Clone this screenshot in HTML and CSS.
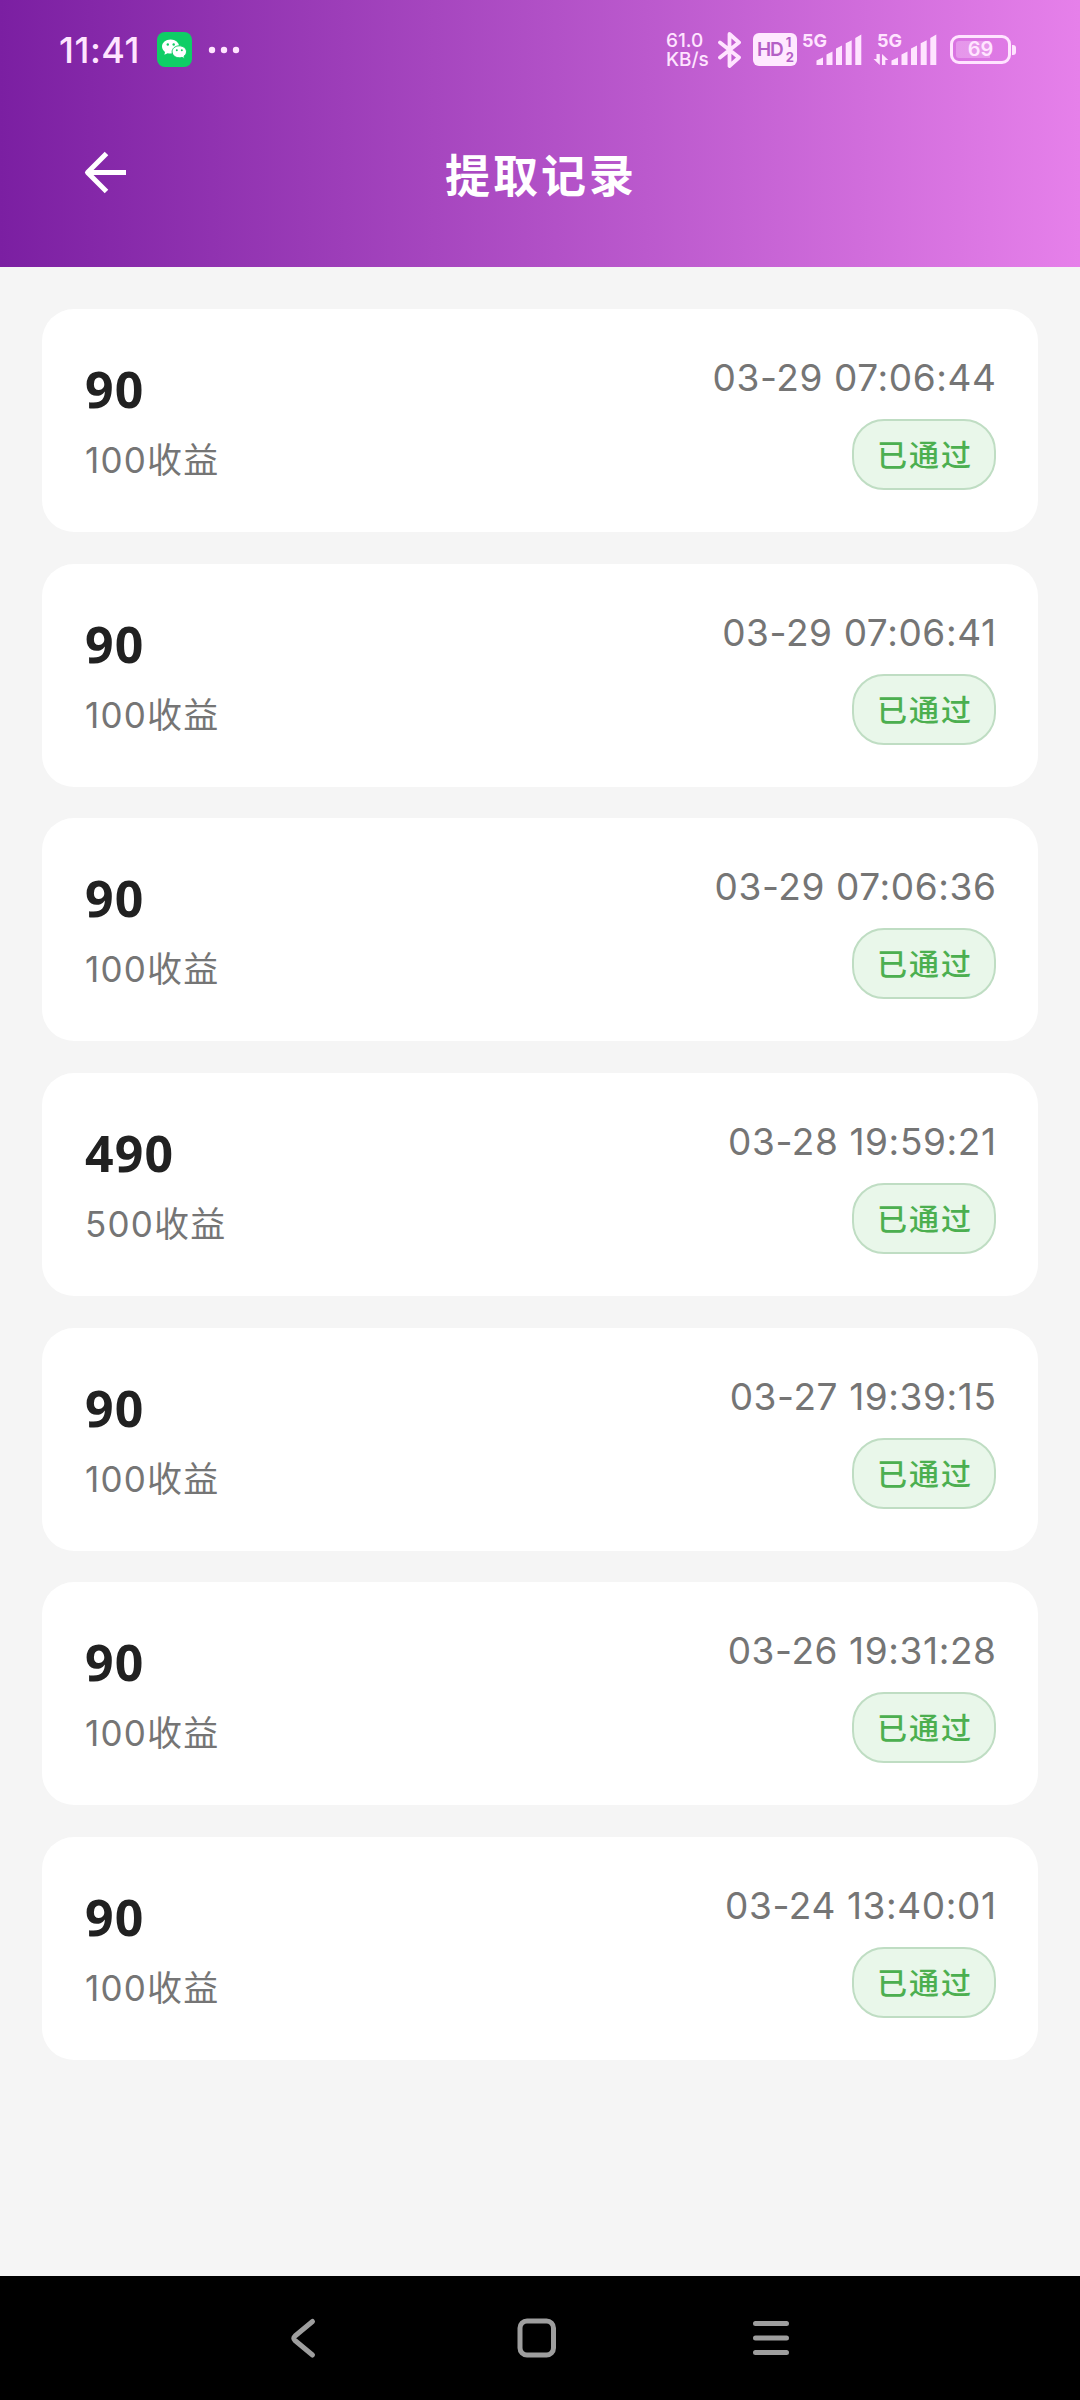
FILE: index.html
```html
<!DOCTYPE html>
<html lang="zh-CN">
<head>
<meta charset="utf-8">
<title>提取记录</title>
<link rel="stylesheet" href="styles.css">
</head>
<body>
<div class="screen">
  <header class="header">
    <div class="status">
      <div class="status-left">
        <span class="clock">11:41</span>
        <svg class="wechat" width="35" height="35" viewBox="0 0 35 35">
          <rect width="35" height="35" rx="8" fill="#0fce66"/>
          <path d="M13.6 7.5c-4.900 0-8.600 3.200-8.600 7.100 0 2.200 1.200 4.100 3 5.400l-.6 2.700 3.200-1.500c1 .3 2 .4 3 .4 4.800 0 8.600-3.100 8.600-7s-3.800-7.100-8.600-7.100z" fill="#fff"/>
          <path d="M22.300 13.800c4 0 7.200 2.700 7.200 6 0 1.800-1 3.400-2.500 4.500l.5 2.300-2.600-1.200c-.8.200-1.700.4-2.600.4-4 0-7.200-2.700-7.200-6s3.200-6 7.200-6z" fill="#fff" stroke="#0fce66" stroke-width="1"/>
          <g fill="#0fce66"><circle cx="10.800" cy="12.500" r="1.200"/><circle cx="16.700" cy="12.500" r="1.200"/><circle cx="19.800" cy="18.200" r="1"/><circle cx="24.800" cy="18.200" r="1"/></g>
        </svg>
        <svg class="dots" width="32" height="8" viewBox="0 0 32 8" fill="currentColor"><circle cx="4" cy="4" r="3.200"/><circle cx="16" cy="4" r="3.200"/><circle cx="28" cy="4" r="3.200"/></svg>
      </div>
      <div class="status-right">
        <div class="speed"><span>61.0</span><span>KB/s</span></div>
        <svg class="bluetooth" width="24" height="38" viewBox="0 0 24 38" fill="none" stroke="currentColor" stroke-width="3.800" stroke-linejoin="round" stroke-linecap="round"><path d="M3 11.500 22 26.500 12.500 35V3L22 11.500 3 26.500"/></svg>
        <div class="hd"><span>HD</span><span class="hd-sims"><i>1</i><i>2</i></span></div>
        <div class="signal">
          <span class="net">5G</span>
          <svg class="bars" width="64" height="33" viewBox="0 0 64 33" fill="currentColor"><path d="M18.500 27.500l6.500-3v7.500h-6.500zM28.500 21.500l6-3V32h-6zM38 15.500l6-3V32h-6zM47.700 10.200l6-3V32h-6zM57.300 5l6-3.500V32h-6z"/></svg>
        </div>
        <div class="signal second">
          <span class="net">5G</span>
          <svg class="bars" width="64" height="33" viewBox="0 0 64 33" fill="currentColor"><path d="M18.500 27.500l6.500-3v7.500h-6.500zM28.500 21.500l6-3V32h-6zM38 15.500l6-3V32h-6zM47.700 10.200l6-3V32h-6zM57.300 5l6-3.500V32h-6zM3.500 21h3.300v11L.5 26h3zM9 32V21l6.300 6h-3v5z"/></svg>
        </div>
        <div class="battery"><span class="level">69</span></div>
        <span class="nub"></span>
      </div>
    </div>
    <div class="titlebar">
      <svg class="back" width="44" height="44" viewBox="0 0 44 44" fill="none" stroke="#fff" stroke-width="5" stroke-linejoin="round"><path d="M43 21.500H5M23.500 2.500 4.500 21.500 23.500 40.500"/></svg>
      <h1>提取记录</h1>
    </div>
  </header>
  <main class="list">
    <article class="card"><div class="info"><strong>90</strong><span>100收益</span></div><div class="meta"><time>03-29 07:06:44</time><span class="badge">已通过</span></div></article>
    <article class="card"><div class="info"><strong>90</strong><span>100收益</span></div><div class="meta"><time>03-29 07:06:41</time><span class="badge">已通过</span></div></article>
    <article class="card"><div class="info"><strong>90</strong><span>100收益</span></div><div class="meta"><time>03-29 07:06:36</time><span class="badge">已通过</span></div></article>
    <article class="card"><div class="info"><strong>490</strong><span>500收益</span></div><div class="meta"><time>03-28 19:59:21</time><span class="badge">已通过</span></div></article>
    <article class="card"><div class="info"><strong>90</strong><span>100收益</span></div><div class="meta"><time>03-27 19:39:15</time><span class="badge">已通过</span></div></article>
    <article class="card"><div class="info"><strong>90</strong><span>100收益</span></div><div class="meta"><time>03-26 19:31:28</time><span class="badge">已通过</span></div></article>
    <article class="card"><div class="info"><strong>90</strong><span>100收益</span></div><div class="meta"><time>03-24 13:40:01</time><span class="badge">已通过</span></div></article>
  </main>
  <nav class="navbar">
    <svg width="35" height="42" viewBox="0 0 35 42"><path d="M24.500 4.500 7 19Q4.500 21.300 7 23.500L24.500 38"/></svg>
    <svg width="40" height="42" viewBox="0 0 40 42"><rect x="3" y="4" width="33.500" height="34" rx="7"/></svg>
    <svg width="40" height="42" viewBox="0 0 40 42"><path d="M4.500 6.500h31M4.500 21h31M4.500 35.500h31"/></svg>
  </nav>
</div>
</body>
</html>
```
FILE: styles.css
```css
* { box-sizing: border-box; }

body {
  margin: 0;
  font-family: Inter, "Noto Sans CJK SC", sans-serif;
}

.screen {
  width: 1080px;
  height: 2400px;
  display: flex;
  flex-direction: column;
  background: #f5f5f5;
}

.header {
  height: 267px;
  background: linear-gradient(90deg, #7b1fa2, #e680ea);
  color: #fff;
}

.status {
  height: 99px;
  padding: 0 64px 0 59px;
  display: flex;
  justify-content: space-between;
  align-items: center;
  color: #ffe4ff;
}

.status-left,
.status-right { display: flex; align-items: center; }

.clock { font-size: 36px; font-weight: 500; line-height: 1; width: 98px; letter-spacing: .5px; }
.dots { margin-left: 16px; }

.speed {
  width: 51px;
  display: flex;
  flex-direction: column;
  font-size: 19px;
  font-weight: 500;
  line-height: 19px;
}

.bluetooth { width: 24px; margin-right: 12px; }

.hd {
  width: 44px;
  height: 33px;
  margin-right: 1px;
  border-radius: 6px;
  background: #ffe9ff;
  color: #b45fc6;
  display: flex;
  align-items: center;
  justify-content: center;
  font-size: 19px;
  font-weight: 600;
  letter-spacing: -1px;
  gap: 3px;
}

.hd-sims { display: flex; flex-direction: column; font-size: 13px; line-height: 15px; font-weight: 700; }
.hd-sims i { font-style: normal; }

.signal { position: relative; width: 64px; height: 33px; margin-right: 10px; }
.signal.second { margin-right: 13px; margin-left: 1px; }
.net { position: absolute; left: 4px; top: -1px; font-size: 18px; line-height: 18px; font-weight: 700; }
.bars { display: block; }

.battery {
  width: 61px;
  height: 29px;
  padding: 3px;
  border: 3px solid currentColor;
  border-radius: 9px;
}

.level {
  display: block;
  width: 49px;
  height: 17px;
  border-radius: 3px;
  background: linear-gradient(90deg, rgba(255, 228, 255, .3) 70%, transparent 70%);
  font-size: 20px;
  line-height: 17px;
  font-weight: 600;
  text-align: center;
}

.nub { width: 4px; height: 10px; margin-left: 1px; border-radius: 0 3px 3px 0; background: currentColor; }

.titlebar {
  height: 168px;
  padding: 0 81px 20px 83px;
  display: grid;
  grid-template-columns: 44px 1fr 44px;
  align-items: center;
}

h1 {
  margin: 7px 0 0;
  font-size: 45px;
  line-height: 60px;
  font-weight: 700;
  letter-spacing: 3px;
  text-align: center;
}

.list {
  flex: 1;
  padding: 42px 42px 0;
  display: flex;
  flex-direction: column;
  gap: 31.700px;
}

.card {
  height: 223px;
  padding: 46px 42px 0 43px;
  border-radius: 32px;
  background: #fff;
  display: flex;
  justify-content: space-between;
}

.info,
.meta { display: flex; flex-direction: column; }
.meta { align-items: flex-end; }

.info strong {
  margin-top: 4px;
  font-family: "Noto Sans", sans-serif;
  font-size: 50px;
  line-height: 60px;
  font-weight: 700;
  letter-spacing: 1.200px;
  color: #212121;
}

.info span {
  margin-top: 16px;
  font-size: 35px;
  line-height: 50px;
  letter-spacing: 1.200px;
  color: #757575;
}

time {
  font-size: 37px;
  line-height: 46px;
  letter-spacing: .6px;
  margin-right: -.6px;
  color: #757575;
}

.badge {
  margin-top: 18px;
  width: 144px;
  height: 71px;
  border: 2px solid #bfddc3;
  border-radius: 32px;
  background: #e9f7ea;
  color: #4caf50;
  font-size: 30px;
  line-height: 69px;
  letter-spacing: 2px;
  text-indent: 2px;
  text-align: center;
  font-weight: 500;
}

.navbar {
  height: 124px;
  background: #000;
  display: flex;
  gap: 194px;
  padding: 41px 0 0 288px;
}

.navbar svg {
  fill: none;
  stroke: #9e9e9e;
  stroke-width: 5;
  stroke-linecap: round;
  stroke-linejoin: round;
}
```
